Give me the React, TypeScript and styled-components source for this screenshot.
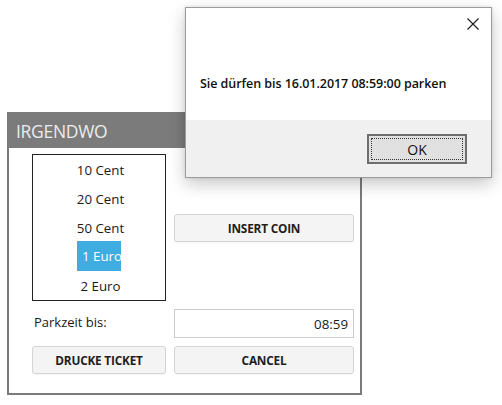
import React from "react";
import styled, { createGlobalStyle } from "styled-components";

const Global = createGlobalStyle`
  html, body { margin: 0; padding: 0; background: #ffffff; }
  body { font-family: "Open Sans", "Noto Sans", sans-serif; }
  * { box-sizing: border-box; }
`;

const Desktop = styled.div`
  position: relative;
  width: 502px;
  height: 405px;
  overflow: hidden;
  background: #ffffff;
`;

/* ---------- main window ---------- */
const MainWindow = styled.div`
  position: absolute;
  left: 7px;
  top: 112px;
  width: 355px;
  height: 283px;
  border: 2px solid #7b7b7b;
  border-top: none;
  background: #ffffff;
  display: flex;
  flex-direction: column;
`;

const TitleBar = styled.div`
  height: 36px;
  background: #7b7b7b;
  display: flex;
  align-items: center;
  padding-left: 7px;
  padding-top: 1px;
  color: #ececec;
  font-size: 17.5px;
  letter-spacing: -0.3px;
`;

const Body = styled.div`
  display: grid;
  grid-template-columns: 134px 180px;
  grid-template-rows: 147px 29px 28px;
  column-gap: 8px;
  row-gap: 8px;
  padding: 6px 6px 0 23px;
`;

const ListBox = styled.div`
  border: 1px solid #222222;
  display: flex;
  flex-direction: column;
`;

const ListItem = styled.div`
  height: 29px;
  display: flex;
  align-items: center;
  justify-content: center;
  font-size: 13.3px;
  color: #1a1a1a;
`;

const ItemLabel = styled.span<{ $selected?: boolean }>`
  display: inline-flex;
  align-items: center;
  height: 30px;
  padding: 0 2px 0 5px;
  margin-top: ${(p) => (p.$selected ? "-1px" : "0")};
  background: ${(p) => (p.$selected ? "#40ade0" : "transparent")};
  color: ${(p) => (p.$selected ? "#ffffff" : "#1a1a1a")};
  width: ${(p) => (p.$selected ? "44px" : "auto")};
  overflow: hidden;
  white-space: nowrap;
`;

const Button = styled.button<{ $center?: boolean }>`
  height: 28px;
  align-self: ${(p) => (p.$center ? "center" : "stretch")};
  border: 1px solid #d4d4d4;
  border-radius: 3px;
  background: #f4f4f4;
  font-family: "Open Sans", "Noto Sans", sans-serif;
  font-weight: 700;
  font-size: 11.8px;
  color: #1e1e1e;
  letter-spacing: -0.2px;
  padding: 0;
  box-shadow: 0 1px 1px rgba(0, 0, 0, 0.04);
`;

const FieldLabel = styled.div`
  display: flex;
  align-items: center;
  padding-left: 2px;
  padding-bottom: 3px;
  font-size: 13px;
  color: #1a1a1a;
`;

const TextBox = styled.div`
  border: 1px solid #cccccc;
  display: flex;
  align-items: center;
  justify-content: flex-end;
  padding-right: 5px;
  font-size: 13.3px;
  color: #1a1a1a;
`;

/* ---------- message box ---------- */
const Dialog = styled.div`
  position: absolute;
  left: 185px;
  top: 7px;
  width: 307px;
  height: 171px;
  border: 1px solid #9c9c9c;
  background: #ffffff;
  display: flex;
  flex-direction: column;
  box-shadow: 0 6px 16px rgba(0, 0, 0, 0.22), 0 0 3px rgba(0, 0, 0, 0.12);
`;

const DialogHeader = styled.div`
  height: 32px;
  display: flex;
  justify-content: flex-end;
  align-items: center;
  padding-right: 12px;
  padding-bottom: 1px;
`;

const Message = styled.div`
  flex: 1;
  display: flex;
  align-items: center;
  padding-left: 14px;
  padding-top: 6px;
  font-family: "Open Sans", "Noto Sans", sans-serif;
  font-size: 12.5px;
  font-weight: 600;
  color: #101010;
  letter-spacing: -0.05px;
`;

const Footer = styled.div`
  height: 57px;
  background: #f0f0f0;
  display: flex;
  justify-content: flex-end;
  padding: 14px 24px 0 0;
`;

const OkButton = styled.button`
  width: 100px;
  height: 30px;
  border: 2px solid #6e6e6e;
  background: #e1e1e1;
  padding: 2px;
  font-family: "Open Sans", "Noto Sans", sans-serif;
  font-size: 14px;
  color: #111111;
`;

const FocusRect = styled.span`
  display: flex;
  align-items: center;
  justify-content: center;
  height: 100%;
  border: 1px dotted #333333;
`;

const CloseIcon = () => (
  <svg width="12" height="12" viewBox="0 0 12 12">
    <path d="M0.5 0.5 L11.5 11.5 M11.5 0.5 L0.5 11.5" stroke="#1a1a1a" strokeWidth="1.1" fill="none" />
  </svg>
);

const coins = ["10 Cent", "20 Cent", "50 Cent", "1 Euro", "2 Euro"];

export default function App() {
  return (
    <Desktop>
      <Global />
      <MainWindow>
        <TitleBar>IRGENDWO</TitleBar>
        <Body>
          <ListBox>
            {coins.map((c) => (
              <ListItem key={c}>
                <ItemLabel $selected={c === "1 Euro"}>{c}</ItemLabel>
              </ListItem>
            ))}
          </ListBox>
          <Button $center>INSERT COIN</Button>
          <FieldLabel>Parkzeit bis:</FieldLabel>
          <TextBox>08:59</TextBox>
          <Button>DRUCKE TICKET</Button>
          <Button>CANCEL</Button>
        </Body>
      </MainWindow>
      <Dialog>
        <DialogHeader>
          <CloseIcon />
        </DialogHeader>
        <Message>Sie dürfen bis 16.01.2017 08:59:00 parken</Message>
        <Footer>
          <OkButton>
            <FocusRect>OK</FocusRect>
          </OkButton>
        </Footer>
      </Dialog>
    </Desktop>
  );
}
